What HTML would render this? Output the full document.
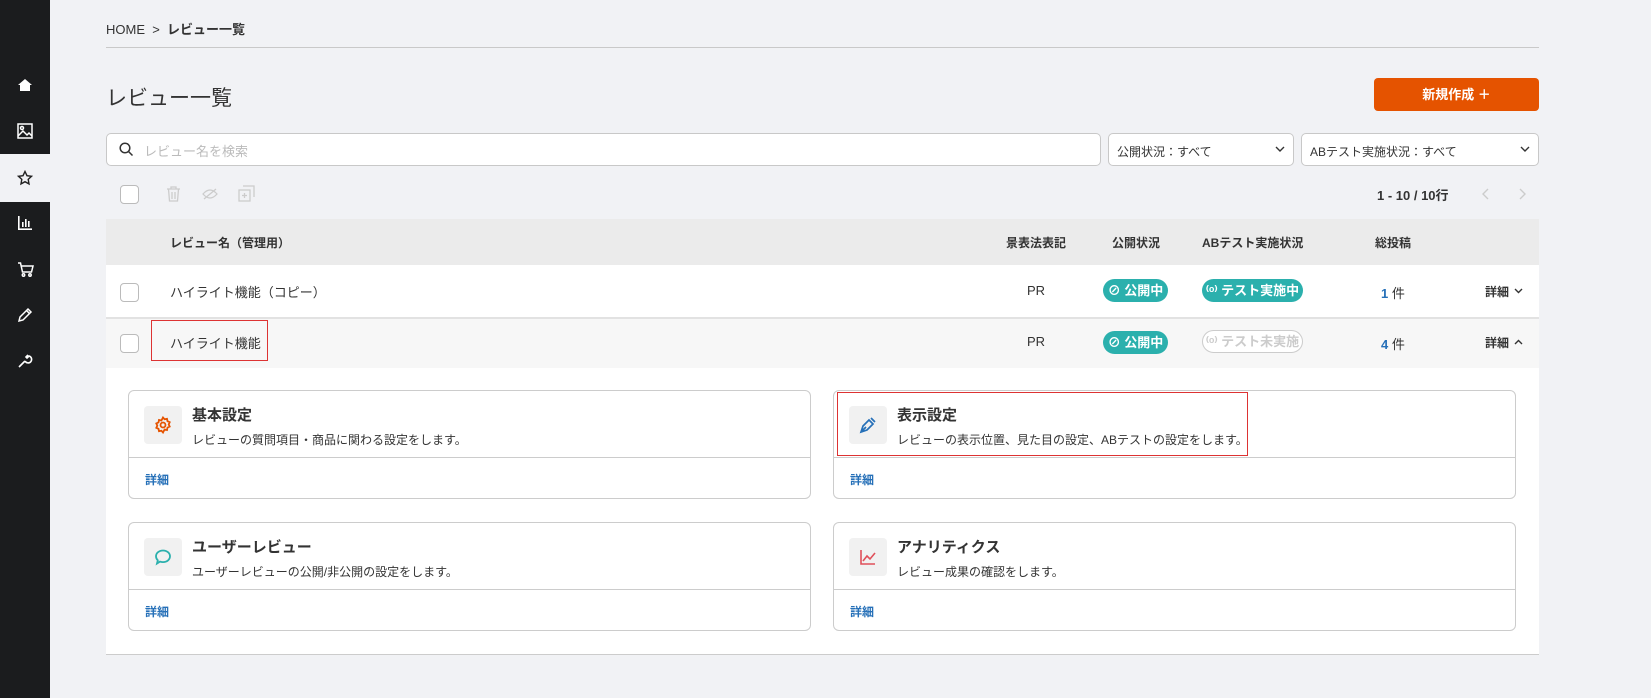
<!DOCTYPE html>
<html><head><meta charset="utf-8"><style>
*{box-sizing:border-box;margin:0;padding:0}
body{width:1651px;height:698px;overflow:hidden;background:#f1f2f5;font-family:"Liberation Sans","Noto Sans CJK JP",sans-serif;color:#333;position:relative}
.side{position:absolute;left:0;top:0;width:50px;height:698px;background:#1b1c1e}
.side .act{position:absolute;left:0;top:154px;width:50px;height:48px;background:#f1f2f5}
.ic{position:absolute;left:17px}
.abs{position:absolute}
.cb{position:absolute;width:19px;height:19px;border:1px solid #bbb;border-radius:4px;background:#fff}
.pill{position:absolute;height:23px;border-radius:12px;background:#2bb0ad;color:#fff;font-size:13px;font-weight:bold;line-height:23px;text-align:center}
.card{position:absolute;background:#fff;border:1px solid #ccc;border-radius:6px}
.card .hd{height:67px;border-bottom:1px solid #ccc;position:relative}
.card .ib{position:absolute;left:15px;top:15px;width:38px;height:38px;background:#f1f1f1;border-radius:4px}
.card .t{position:absolute;left:63px;top:13px;font-size:15px;font-weight:bold}
.card .d{position:absolute;left:63px;top:40px;font-size:12px}
.card .lk{position:absolute;left:16px;top:80px;font-size:12px;font-weight:bold;color:#2670b8}
.chev{position:absolute;right:8px;top:12px}
</style></head><body>
<div class="side"><div class="act"></div>
<svg class="ic" style="top:77px" width="16" height="16" viewBox="0 0 16 16"><path d="M1 8L8 2l7 6h-2v6H3V8z" fill="#fff"/></svg>
<svg class="ic" style="top:123px" width="16" height="16" viewBox="0 0 16 16" fill="none" stroke="#fff" stroke-width="1.5"><rect x="1" y="1" width="14" height="14"/><circle cx="5" cy="5" r="1.5"/><path d="M1 13l5-5 4 4 2-2 3 3"/></svg>
<svg class="ic" style="top:170px" width="16" height="16" viewBox="0 0 16 16" fill="none" stroke="#222" stroke-width="1.4"><path d="M8 1.5l2 4.2 4.5.6-3.3 3.1.8 4.5L8 11.7l-4 2.2.8-4.5L1.5 6.3 6 5.7z"/></svg>
<svg class="ic" style="top:215px" width="16" height="16" viewBox="0 0 16 16" fill="#fff"><rect x="1" y="1" width="1.6" height="14"/><rect x="1" y="13.4" width="14" height="1.6"/><rect x="5" y="7" width="1.6" height="5"/><rect x="8" y="4" width="1.6" height="8"/><rect x="11" y="6" width="1.6" height="6"/></svg>
<svg class="ic" style="top:261px" width="17" height="16" viewBox="0 0 17 16" fill="none" stroke="#fff" stroke-width="1.5"><path d="M1 2h2.5l2 9h9l1.5-6H4.5"/><circle cx="6.5" cy="14" r="1.2"/><circle cx="13" cy="14" r="1.2"/></svg>
<svg class="ic" style="top:307px" width="16" height="16" viewBox="0 0 16 16" fill="none" stroke="#fff" stroke-width="1.5"><path d="M2 14l1-4 8-8 3 3-8 8z M9.5 3.5l3 3"/></svg>
<svg class="ic" style="top:353px" width="16" height="16" viewBox="0 0 16 16" fill="none" stroke="#fff" stroke-width="1.6"><path d="M2 14l6-6 M8 8a3.5 3.5 0 1 0 4-5l-2 2-1-1 2-2"/></svg>
</div>

<div class="abs" style="left:106px;top:19px;font-size:13px">HOME &nbsp;&gt;&nbsp; <b>レビュー一覧</b></div>
<div class="abs" style="left:106px;top:47px;width:1433px;height:1px;background:#c9c9c9"></div>
<div class="abs" style="left:106px;top:82px;font-size:21px">レビュー一覧</div>
<div class="abs" style="left:1374px;top:78px;width:165px;height:33px;background:#e55300;border-radius:4px;color:#fff;font-size:13px;font-weight:bold;text-align:center;line-height:33px">新規作成 ＋</div>

<div class="abs" style="left:106px;top:133px;width:995px;height:33px;background:#fff;border:1px solid #c8c8c8;border-radius:5px"></div>
<svg class="abs" style="left:119px;top:142px" width="15" height="15" viewBox="0 0 15 15" fill="none" stroke="#333" stroke-width="1.5"><circle cx="6" cy="6" r="4.8"/><path d="M9.5 9.5l4 4"/></svg>
<div class="abs" style="left:144px;top:141px;font-size:13px;color:#bbb">レビュー名を検索</div>
<div class="abs" style="left:1108px;top:133px;width:186px;height:33px;background:#fff;border:1px solid #c8c8c8;border-radius:5px;font-size:12px;padding:9px 8px">公開状況：すべて<svg class="chev" width="10" height="7" viewBox="0 0 10 7" fill="none" stroke="#333" stroke-width="1.4"><path d="M1 1l4 4 4-4"/></svg></div>
<div class="abs" style="left:1301px;top:133px;width:238px;height:33px;background:#fff;border:1px solid #c8c8c8;border-radius:5px;font-size:12px;padding:9px 8px">ABテスト実施状況：すべて<svg class="chev" width="10" height="7" viewBox="0 0 10 7" fill="none" stroke="#333" stroke-width="1.4"><path d="M1 1l4 4 4-4"/></svg></div>

<div class="cb" style="left:120px;top:185px"></div>
<svg class="abs" style="left:166px;top:186px" width="15" height="16" viewBox="0 0 15 16" fill="none" stroke="#ccc" stroke-width="1.3"><path d="M1 3h13M5 3V1h5v2M2.5 3l1 12h8l1-12M6 6v7M9 6v7"/></svg>
<svg class="abs" style="left:202px;top:188px" width="16" height="12" viewBox="0 0 16 12" fill="none" stroke="#ccc" stroke-width="1.3"><path d="M1 6q7-8 14 0q-7 8-14 0z M2 11L14 1"/></svg>
<svg class="abs" style="left:238px;top:185px" width="17" height="17" viewBox="0 0 17 17" fill="none" stroke="#ccc" stroke-width="1.3"><rect x="1" y="5" width="11" height="11"/><path d="M5 1h11v11M6.5 8v5M4 10.5h5"/></svg>
<div class="abs" style="left:1377px;top:185px;font-size:13px;font-weight:bold">1 - 10 / 10行</div>
<svg class="abs" style="left:1482px;top:188px" width="8" height="12" viewBox="0 0 8 12" fill="none" stroke="#ccc" stroke-width="1.4"><path d="M6 1L1 6l5 5"/></svg>
<svg class="abs" style="left:1518px;top:188px" width="8" height="12" viewBox="0 0 8 12" fill="none" stroke="#ccc" stroke-width="1.4"><path d="M2 1l5 5-5 5"/></svg>

<div class="abs" style="left:106px;top:219px;width:1433px;height:46px;background:#ebebeb"></div>
<div class="abs" style="top:234px;left:170px;font-size:12px;font-weight:bold">レビュー名（管理用）</div>
<div class="abs" style="top:234px;left:1006px;font-size:12px;font-weight:bold">景表法表記</div>
<div class="abs" style="top:234px;left:1112px;font-size:12px;font-weight:bold">公開状況</div>
<div class="abs" style="top:234px;left:1202px;font-size:12px;font-weight:bold">ABテスト実施状況</div>
<div class="abs" style="top:234px;left:1375px;font-size:12px;font-weight:bold">総投稿</div>

<div class="abs" style="left:106px;top:265px;width:1433px;height:52px;background:#fff"></div>
<div class="abs" style="left:106px;top:317px;width:1433px;height:2px;background:#e2e2e2"></div>
<div class="abs" style="left:106px;top:319px;width:1433px;height:49px;background:#f7f7f7"></div>

<div class="cb" style="left:120px;top:283px"></div>
<div class="abs" style="left:170px;top:282px;font-size:13px">ハイライト機能（コピー）</div>
<div class="abs" style="left:1027px;top:283px;font-size:13px">PR</div>
<div class="pill" style="left:1103px;top:279px;width:65px">⊘ 公開中</div>
<div class="pill" style="left:1202px;top:279px;width:101px">⁽ᵒ⁾ テスト実施中</div>
<div class="abs" style="left:1381px;top:283px;font-size:13px"><b style="color:#2670b8">1</b> 件</div>
<div class="abs" style="left:1485px;top:283px;font-size:12px;font-weight:bold">詳細</div>
<svg class="abs" style="left:1514px;top:288px" width="9" height="6" viewBox="0 0 9 6" fill="none" stroke="#333" stroke-width="1.4"><path d="M1 1l3.5 3.5L8 1"/></svg>

<div class="cb" style="left:120px;top:334px"></div>
<div class="abs" style="left:151px;top:320px;width:117px;height:41px;border:1px solid #d33"></div>
<div class="abs" style="left:170px;top:333px;font-size:13px">ハイライト機能</div>
<div class="abs" style="left:1027px;top:334px;font-size:13px">PR</div>
<div class="pill" style="left:1103px;top:331px;width:65px">⊘ 公開中</div>
<div class="pill" style="left:1202px;top:330px;width:101px;background:#fff;border:1px solid #ccc;color:#ccc;line-height:22px">⁽ᵒ⁾ テスト未実施</div>
<div class="abs" style="left:1381px;top:334px;font-size:13px"><b style="color:#2670b8">4</b> 件</div>
<div class="abs" style="left:1485px;top:334px;font-size:12px;font-weight:bold">詳細</div>
<svg class="abs" style="left:1514px;top:339px" width="9" height="6" viewBox="0 0 9 6" fill="none" stroke="#333" stroke-width="1.4"><path d="M1 5l3.5-3.5L8 5"/></svg>

<div class="abs" style="left:106px;top:368px;width:1433px;height:287px;background:#fff;border-bottom:1px solid #ccc"></div>

<div class="card" style="left:128px;top:390px;width:683px;height:109px"><div class="hd"><div class="ib"><svg style="margin:10px" width="18" height="18" viewBox="0 0 18 18" fill="none" stroke="#e55300" stroke-width="1.8"><circle cx="9" cy="9" r="2.5"/><path d="M9 1.5l1.6 1.8 2.4-.5.5 2.4 2.2 1-1 2.2 1 2.2-2.2 1-.5 2.4-2.4-.5L9 16.5l-1.6-1.8-2.4.5-.5-2.4-2.2-1 1-2.2-1-2.2 2.2-1 .5-2.4 2.4.5z"/></svg></div><div class="t">基本設定</div><div class="d">レビューの質問項目・商品に関わる設定をします。</div></div><div class="lk">詳細</div></div>
<div class="card" style="left:833px;top:390px;width:683px;height:109px"><div class="hd"><div class="ib"><svg style="margin:10px" width="18" height="18" viewBox="0 0 18 18" fill="none" stroke="#2670b8" stroke-width="1.7"><path d="M2 16l2-6 6-6 4 4-6 6z M12 2l4 4 M2 16l5-5"/></svg></div><div class="t">表示設定</div><div class="d">レビューの表示位置、見た目の設定、ABテストの設定をします。</div></div><div class="lk">詳細</div></div>
<div class="abs" style="left:837px;top:392px;width:411px;height:64px;border:1px solid #d33"></div>
<div class="card" style="left:128px;top:522px;width:683px;height:109px"><div class="hd"><div class="ib"><svg style="margin:10px" width="18" height="18" viewBox="0 0 18 18" fill="none" stroke="#2bb0ad" stroke-width="1.8"><path d="M9 2.5c4 0 7 2.6 7 5.8s-3 5.8-7 5.8c-1 0-2-.2-3-.5L3 15.5l.8-3.2C2.6 11.2 2 9.800 2 8.3 2 5.1 5 2.5 9 2.5z"/></svg></div><div class="t">ユーザーレビュー</div><div class="d">ユーザーレビューの公開/非公開の設定をします。</div></div><div class="lk">詳細</div></div>
<div class="card" style="left:833px;top:522px;width:683px;height:109px"><div class="hd"><div class="ib"><svg style="margin:10px" width="18" height="18" viewBox="0 0 18 18" fill="none" stroke="#e0505a" stroke-width="1.6"><path d="M2 2v14h14 M4 13l4-5 3 3 5-6"/></svg></div><div class="t">アナリティクス</div><div class="d">レビュー成果の確認をします。</div></div><div class="lk">詳細</div></div>
</body></html>
